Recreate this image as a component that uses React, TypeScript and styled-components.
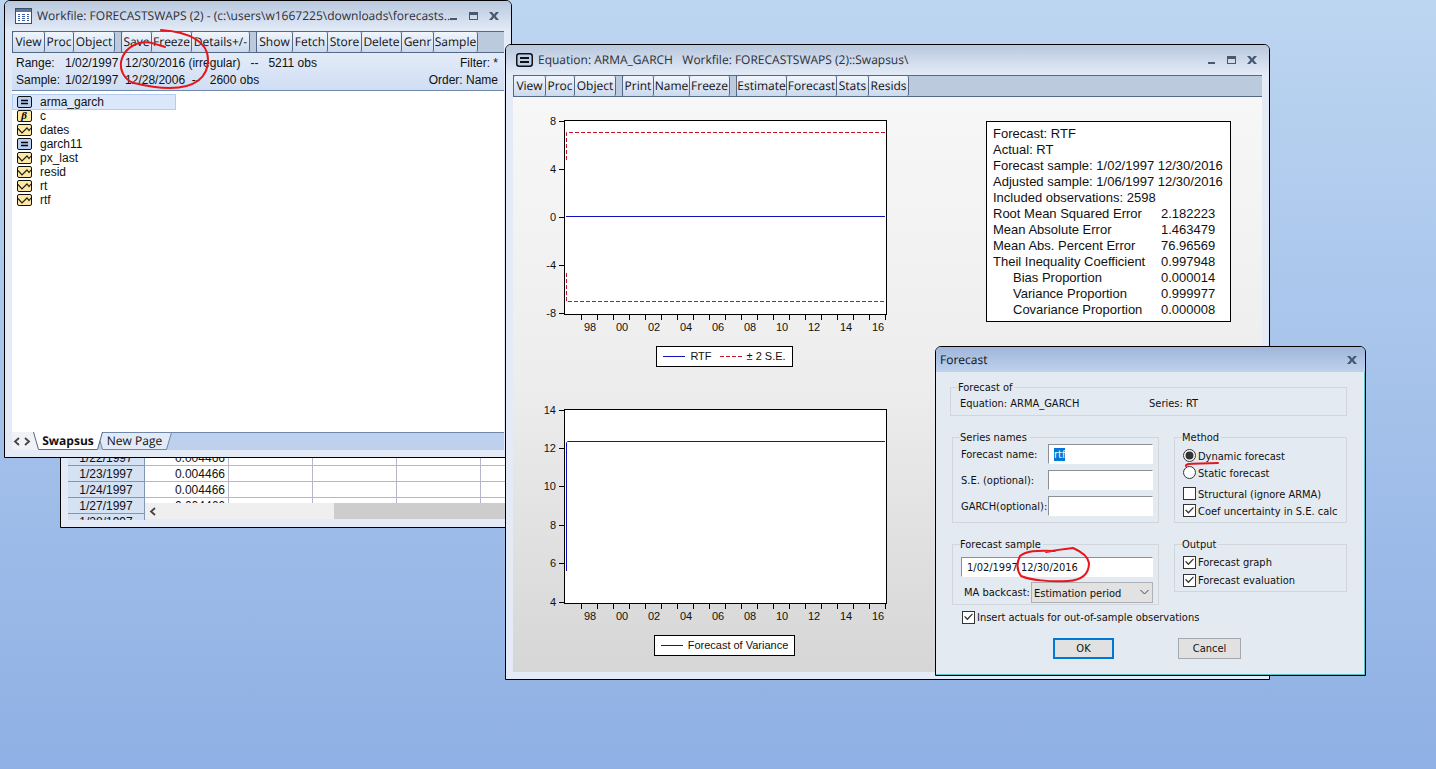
import React, { useEffect, useRef } from "react";
import styled, { createGlobalStyle, css } from "styled-components";

const uiFont = '"Open Sans", "Noto Sans", sans-serif';
const arial = '"Liberation Sans", Arial, sans-serif';
const dialogFont = '"DejaVu Sans Condensed", "DejaVu Sans", sans-serif';

const GlobalStyle = createGlobalStyle`
  * { box-sizing: border-box; }
  body { margin: 0; font-family: ${arial}; color: #111; }
  button, input, select { font: inherit; color: inherit; margin: 0; text-rendering: inherit; }
`;

const Desktop = styled.main`
  position: relative;
  min-height: 100vh;
  overflow: hidden;
  background: linear-gradient(#bcd5f1, #8fb0e4);
`;

/* ---------- window chrome ---------- */

const Frame = styled.section`
  position: absolute;
  display: flex;
  flex-direction: column;
  border: 1px solid #000;
  border-radius: 6px 6px 0 0;
  background: #e4ebf7;
  overflow: hidden;
`;

const DataWindow = styled(Frame)`
  left: 60px;
  top: 434px;
  width: 470px;
  height: 94px;
  padding: 15px 7px 7px;
`;

const WorkfileWindow = styled(Frame)`
  left: 4px;
  top: 0;
  width: 508px;
  height: 458px;
`;

const EquationWindow = styled(Frame)`
  left: 505px;
  top: 44px;
  width: 765px;
  height: 636px;
`;

const TitleBar = styled.header`
  display: flex;
  flex: none;
  align-items: center;
  height: 30px;
  padding: 0 7px 0 10px;
  background: linear-gradient(#b9c8de, #e3ebf7);
  font-family: ${uiFont};
  text-rendering: geometricPrecision;
  svg { flex: none; }
`;

const TitleText = styled.h1`
  flex: 1;
  min-width: 0;
  margin: 0 0 0 5px;
  font-size: 12px;
  line-height: 18px;
  font-weight: 400;
  color: #2b2f38;
  white-space: pre;
`;

const CaptionButton = styled.button`
  display: flex;
  flex: none;
  width: 20px;
  height: 20px;
  padding: 4px;
  border: 0;
  background: none;
  color: #465872;
`;

const Body = styled.div`
  display: flex;
  flex: 1;
  flex-direction: column;
  min-height: 0;
  margin: 0 7px 7px;
`;

const Toolbar = styled.nav`
  display: flex;
  flex: none;
  gap: 6px;
  height: 22px;
  border-top: 1px solid #536985;
  border-bottom: 1px solid #536985;
  background: #bccadd;
  font-family: ${uiFont};
  text-rendering: geometricPrecision;
`;

const ToolGroup = styled.div`
  display: flex;
  border-left: 1px solid #536985;
`;

const ToolButton = styled.button<{ $w: number }>`
  width: ${(p) => p.$w}px;
  padding: 0;
  border: 0;
  border-right: 1px solid #536985;
  border-radius: 2px;
  background: linear-gradient(#f1f6fd, #cbd9ed);
  font-size: 12px;
  line-height: 18px;
  text-align: center;
  white-space: nowrap;
`;

/* ---------- workfile ---------- */

const Info = styled.div`
  display: grid;
  grid-template-columns: 49px 1fr auto;
  flex: none;
  padding: 2px 6px 1px 4px;
  border-bottom: 1px solid #6f87a8;
  background: linear-gradient(#e3ebf8, #cfdef4);
  font-size: 12px;
  line-height: 17px;
  white-space: pre;
`;

const InfoEnd = styled.span`
  text-align: right;
`;

const ObjectList = styled.ul`
  flex: 1;
  margin: 0;
  padding: 4px 0 0;
  list-style: none;
  background: #fff;
  font-size: 12px;
`;

const ObjectItem = styled.li<{ $selected?: boolean }>`
  display: flex;
  align-items: center;
  gap: 8px;
  width: 164px;
  height: 14px;
  padding-left: 5px;
  ${(p) =>
    p.$selected &&
    css`
      background: #dbe8fb;
      box-shadow: 0 -1px #b3cdf2, 0 1px #b3cdf2, inset 1px 0 #b3cdf2, inset -1px 0 #b3cdf2;
    `}
`;

const TabBar = styled.div`
  display: flex;
  flex: none;
  height: 18px;
  background: #f0f2f6;
  font-family: ${uiFont};
  text-rendering: geometricPrecision;
`;

const TabArrow = styled.button`
  display: flex;
  align-items: center;
  width: 10px;
  padding: 0 1px;
  border: 0;
  background: none;
  color: #444;
`;

const Tab = styled.button<{ $active?: boolean }>`
  position: relative;
  z-index: ${(p) => (p.$active ? 2 : 1)};
  width: ${(p) => (p.$active ? 70 : 75)}px;
  margin-left: ${(p) => (p.$active ? 1 : -6)}px;
  padding: 0;
  border: 0;
  background: none;
  font-size: 12px;
  line-height: 18px;
  font-weight: ${(p) => (p.$active ? 700 : 400)};
  svg { position: absolute; inset: 0; z-index: -1; }
`;

const TabFill = styled.div`
  flex: 1;
  margin-left: -74px;
  border-top: 1px solid #6f87a8;
  background: #bdd0ed;
`;

/* ---------- data sheet ---------- */

const SheetArea = styled.div`
  position: relative;
  flex: 1;
  min-height: 0;
  overflow: hidden;
  background: #fff;
`;

const Sheet = styled.table`
  width: 497px;
  table-layout: fixed;
  border-spacing: 0;
  font-size: 12px;
  line-height: 14px;
  th, td {
    height: 16px;
    padding: 1px 3px 0;
    border-right: 1px solid #b4b8ca;
    border-bottom: 1px solid #b4b8ca;
    text-align: right;
    font-weight: 400;
  }
  th {
    border-color: #8296b5;
    background: #d5e2f4;
    text-align: center;
  }
`;

const ScrollBar = styled.div`
  position: absolute;
  left: 77px;
  right: 0;
  bottom: 0;
  display: flex;
  height: 17px;
  border-bottom: 1px solid #e4ebf7;
  background: #efefef;
`;

const ScrollButton = styled.button`
  display: flex;
  align-items: center;
  width: 17px;
  padding: 0 4px;
  border: 0;
  background: none;
  color: #444;
`;

const ScrollThumb = styled.div`
  flex: 1;
  margin-left: 172px;
  background: #cdcdcd;
`;

/* ---------- equation output ---------- */

const Output = styled.div`
  display: flex;
  flex: 1;
  align-items: flex-start;
  justify-content: space-between;
  padding: 18px 31px 0 27px;
  background: linear-gradient(#f7f7f7, #ededed 50%, #d6d6d6);
`;

const Charts = styled.div`
  display: flex;
  flex-direction: column;
  gap: 37px;
`;

const Figure = styled.figure`
  display: flex;
  flex-direction: column;
  align-items: center;
  gap: 9px;
  margin: 0;
  svg { display: block; }
  text { font-family: ${arial}; font-size: 11px; fill: #111; }
`;

const Legend = styled.figcaption`
  display: flex;
  align-items: center;
  gap: 8px;
  height: 21px;
  margin-left: 19px;
  padding: 0 6px;
  border: 1px solid #000;
  background: #fff;
  font-size: 11px;
  line-height: 19px;
`;

const LegendKey = styled.span`
  display: flex;
  align-items: center;
  gap: 5px;
`;

const StatsBox = styled.div`
  width: 245px;
  margin-top: 6px;
  padding: 4px 6px 3px;
  border: 1px solid #000;
  background: #fff;
  font-size: 13px;
  line-height: 16px;
  white-space: nowrap;
  p { margin: 0; }
`;

const StatsTable = styled.table`
  border-spacing: 0;
  th, td { padding: 0; text-align: left; font-weight: 400; }
  th { width: 168px; }
`;

const StatName = styled.th<{ $indent?: boolean }>`
  && { padding-left: ${(p) => (p.$indent ? 20 : 0)}px; }
`;

/* ---------- forecast dialog ---------- */

const Dialog = styled(Frame)`
  left: 935px;
  top: 346px;
  width: 431px;
  height: 330px;
  background: #e4eaf2;
  box-shadow: inset -1px -1px #58c3c6;
  font-family: ${dialogFont};
  font-size: 11px;
  line-height: 14px;
`;

const DialogTitle = styled.header`
  display: flex;
  align-items: center;
  justify-content: space-between;
  height: 25px;
  padding: 0 3px 0 4px;
  background: linear-gradient(#9fb6da, #bfd2ec);
  font-family: ${uiFont};
  text-rendering: geometricPrecision;
  h2 { margin: 0; font-size: 12px; font-weight: 400; }
`;

const Form = styled.form`
  display: flex;
  flex-direction: column;
  gap: 14px;
  padding: 8px 18px 0 14px;
`;

const Group = styled.fieldset`
  min-width: 0;
  margin: 0;
  padding: 0 5px 6px 8px;
  border: 1px solid #d1d6dd;
  legend {
    height: 14px;
    margin-left: -1px;
    padding: 0 2px 0 0;
    line-height: 16px;
  }
`;

const SummaryRow = styled.div`
  display: grid;
  grid-template-columns: 189px 1fr;
  padding-left: 1px;
  line-height: 20px;
`;

const EquationGroup = styled(Group)`
  height: 36px;
`;

const Columns = styled.div`
  display: grid;
  grid-template-columns: 207fr 173fr;
  align-items: start;
  gap: 14px 15px;
  margin-left: 2px;
`;

const FieldRow = styled.div`
  display: grid;
  grid-template-columns: 87px 1fr;
  align-items: center;
  & + & { margin-top: 6px; }
  label { padding-top: 2px; white-space: nowrap; }
`;

const SeriesGroup = styled(Group)`
  height: 93px;
`;

const MethodGroup = styled(Group)`
  height: 93px;
  padding-top: 3px;
`;

const SampleGroup = styled(Group)`
  height: 68px;
  padding-top: 6px;
`;

const OutputGroup = styled(Group)`
  height: 55px;
  padding-top: 2px;
`;

const TextInput = styled.input`
  width: 100%;
  height: 20px;
  padding: 0 5px;
  border: 1px solid;
  border-color: #8b8f96 #fff #fff #8b8f96;
  border-radius: 0;
  background: #fff;
  outline: 0;
  &::selection { background: #0078d7; color: #fff; }
`;

const BackcastRow = styled.div`
  display: flex;
  align-items: center;
  justify-content: space-between;
  margin-top: 5px;
  padding-left: 3px;
`;

const SelectBox = styled.div`
  position: relative;
  width: 122px;
  svg { position: absolute; right: 4px; top: 7px; pointer-events: none; }
`;

const Select = styled.select`
  width: 100%;
  height: 21px;
  padding: 2px 2px 0;
  border: 1px solid #adb1b6;
  border-radius: 0;
  background: #e2e2e2;
  appearance: none;
`;

const Option = styled.label<{ $h: number; $gap?: boolean }>`
  display: flex;
  align-items: center;
  gap: 2px;
  height: ${(p) => p.$h}px;
  margin-top: ${(p) => (p.$gap ? 4 : 0)}px;
  white-space: nowrap;
  span { padding-top: 2px; }
`;

const CheckInput = styled.input`
  flex: none;
  width: 13px;
  height: 13px;
  border: 1px solid #333;
  background: #fff;
  appearance: none;
  &[type="radio"] { border-radius: 50%; }
  &:checked::after {
    content: "";
    display: block;
    width: 11px;
    height: 11px;
    background: #333;
    clip-path: polygon(10% 48%, 19% 40%, 40% 62%, 82% 18%, 90% 26%, 40% 80%);
  }
  &[type="radio"]:checked::after { clip-path: circle(4px); }
`;

const InsertRow = styled.div`
  margin: -9px 0 0 12px;
`;

const Actions = styled.div`
  display: flex;
  gap: 64px;
  margin-left: 103px;
`;

const PushButton = styled.button<{ $primary?: boolean }>`
  width: ${(p) => (p.$primary ? 61 : 63)}px;
  height: 21px;
  padding: 1px 0 0;
  border: ${(p) => (p.$primary ? "2px solid #0078d7" : "1px solid #a5a9ae")};
  background: #e1e1e1;
`;

const Ink = styled.svg`
  position: absolute;
  left: 0;
  top: 0;
  pointer-events: none;
`;

/* ---------- drawings ---------- */

const CloseIcon = () => (
  <svg width="12" height="12" viewBox="0 0 12 12">
    <path d="M1 2h3l2 2.500L8 2h3L7.600 6l3.400 4H8L6 7.500 4 10H1l3.400-4z" fill="currentColor" />
  </svg>
);

const CaptionButtons = () => (
  <>
    <CaptionButton type="button" aria-label="Minimize">
      <svg width="12" height="12" viewBox="0 0 12 12"><path d="M2 8h7v2H2z" fill="currentColor" /></svg>
    </CaptionButton>
    <CaptionButton type="button" aria-label="Maximize">
      <svg width="12" height="12" viewBox="0 0 12 12"><path d="M1 2h9v8H1zM2 5v4h7V5z" fillRule="evenodd" fill="currentColor" /></svg>
    </CaptionButton>
    <CaptionButton type="button" aria-label="Close"><CloseIcon /></CaptionButton>
  </>
);

const WorkfileIcon = () => (
  <svg width="17" height="16" viewBox="0 0 17 16">
    <rect x="0.500" y="0.500" width="16" height="15" fill="#fff" stroke="#3c4e69" />
    <path d="M1 1h15v3H1z" fill="#5e7798" />
    <path d="M3 6.500h2M7 6.500h3M12 6.500h2M3 8.500h2M7 8.500h3M12 8.500h2M3 10.500h2M7 10.500h3M12 10.500h2M3 12.500h2M7 12.500h3M12 12.500h2" stroke="#3d62a8" />
  </svg>
);

const EquationTitleIcon = () => (
  <svg width="17" height="14" viewBox="0 0 17 14">
    <rect x="0.750" y="0.750" width="15.500" height="12.500" rx="2.500" fill="#bcd0ee" stroke="#111" strokeWidth="1.500" />
    <path d="M4 5h9M4 9h9" stroke="#111" strokeWidth="2" />
  </svg>
);

type Kind = "equation" | "coef" | "series";

const ObjectIcon = ({ kind }: { kind: Kind }) => (
  <svg width="15" height="12" viewBox="0 0 15 12">
    <rect x="0.500" y="0.500" width="14" height="11" rx="1.500" fill={kind === "equation" ? "#b9cef0" : "#ffe8a0"} stroke="#111" />
    {kind === "equation" && <path d="M4 4.500h7M4 7.500h7" stroke="#000" strokeWidth="1.500" />}
    {kind === "coef" && (
      <text x="7" y="9" textAnchor="middle" fontFamily="Liberation Serif, serif" fontSize="11" fontStyle="italic" fontWeight="700">β</text>
    )}
    {kind === "series" && <path d="M1 4.500l4 4.500L10 4l2 2.500 2-2.500" fill="none" stroke="#222" strokeWidth="1.200" />}
  </svg>
);

const Chevron = ({ dir }: { dir: "left" | "right" }) => (
  <svg width="8" height="9" viewBox="0 0 8 9">
    <path d={dir === "left" ? "M6 1L2 4.500 6 8" : "M2 1l4 3.500L2 8"} fill="none" stroke="currentColor" strokeWidth="1.800" />
  </svg>
);

interface ChartProps {
  label: string;
  ticks: { y: number; text: string }[];
  children: React.ReactNode;
}

const years = ["98", "00", "02", "04", "06", "08", "10", "12", "14", "16"];

const Chart = ({ label, ticks, children }: ChartProps) => (
  <svg width="350" height="222" viewBox="0 0 350 222" role="img" aria-label={label}>
    <rect x="24.500" y="5.500" width="322" height="194" fill="#fff" stroke="#000" />
    {ticks.map((t) => (
      <g key={t.text}>
        <path d={`M19 ${t.y + 0.5}h5`} stroke="#000" />
        <text x="16" y={t.y + 4} textAnchor="end">{t.text}</text>
      </g>
    ))}
    {Array.from({ length: 20 }, (_, i) => (
      <path key={i} d={`M${41.5 + i * 16} 200v5`} stroke="#000" />
    ))}
    {years.map((y, i) => (
      <text key={y} x={50 + i * 32} y="216" textAnchor="middle">{y}</text>
    ))}
    {children}
  </svg>
);

const Line = ({ dashed }: { dashed?: boolean }) => (
  <svg width="22" height="3" viewBox="0 0 22 3">
    <path d="M0 1.500h22" stroke={dashed ? "#c4142c" : "#1010c0"} strokeDasharray={dashed ? "4 2" : undefined} />
  </svg>
);

/* ---------- data ---------- */

const workfileTools: [string, number][][] = [
  [["View", 32], ["Proc", 29], ["Object", 41]],
  [["Save", 30], ["Freeze", 40], ["Details+/-", 58]],
  [["Show", 36], ["Fetch", 35], ["Store", 34], ["Delete", 40], ["Genr", 32], ["Sample", 44]],
];

const equationTools: [string, number][][] = [
  [["View", 32], ["Proc", 29], ["Object", 41]],
  [["Print", 31], ["Name", 36], ["Freeze", 40]],
  [["Estimate", 50], ["Forecast", 50], ["Stats", 32], ["Resids", 40]],
];

const objects: { name: string; kind: Kind }[] = [
  { name: "arma_garch", kind: "equation" },
  { name: "c", kind: "coef" },
  { name: "dates", kind: "series" },
  { name: "garch11", kind: "equation" },
  { name: "px_last", kind: "series" },
  { name: "resid", kind: "series" },
  { name: "rt", kind: "series" },
  { name: "rtf", kind: "series" },
];

const stats: [string, string, boolean][] = [
  ["Root Mean Squared Error", "2.182223", false],
  ["Mean Absolute Error", "1.463479", false],
  ["Mean Abs. Percent Error", "76.96569", false],
  ["Theil Inequality Coefficient", "0.997948", false],
  ["Bias Proportion", "0.000014", true],
  ["Variance Proportion", "0.999977", true],
  ["Covariance Proportion", "0.000008", true],
];

const sheetDates = ["1/22/1997", "1/23/1997", "1/24/1997", "1/27/1997", "1/28/1997"];

const Tools = ({ groups }: { groups: [string, number][][] }) => (
  <Toolbar>
    {groups.map((g) => (
      <ToolGroup key={g[0][0]}>
        {g.map(([name, w]) => (
          <ToolButton key={name} type="button" $w={w}>{name}</ToolButton>
        ))}
      </ToolGroup>
    ))}
  </Toolbar>
);

const ForecastDialog = () => {
  const nameRef = useRef<HTMLInputElement>(null);
  useEffect(() => {
    nameRef.current?.focus();
    nameRef.current?.select();
  }, []);

  return (
    <Dialog role="dialog" aria-label="Forecast">
      <DialogTitle>
        <h2>Forecast</h2>
        <CaptionButton type="button" aria-label="Close"><CloseIcon /></CaptionButton>
      </DialogTitle>
      <Form>
        <EquationGroup>
          <legend>Forecast of</legend>
          <SummaryRow>
            <span>Equation: ARMA_GARCH</span>
            <span>Series: RT</span>
          </SummaryRow>
        </EquationGroup>
        <Columns>
          <SeriesGroup>
            <legend>Series names</legend>
            <FieldRow>
              <label htmlFor="fname">Forecast name:</label>
              <TextInput id="fname" ref={nameRef} defaultValue="rtf" />
            </FieldRow>
            <FieldRow>
              <label htmlFor="se">S.E. (optional):</label>
              <TextInput id="se" />
            </FieldRow>
            <FieldRow>
              <label htmlFor="garch">GARCH(optional):</label>
              <TextInput id="garch" />
            </FieldRow>
          </SeriesGroup>
          <MethodGroup>
            <legend>Method</legend>
            <Option $h={17}><CheckInput type="radio" name="method" defaultChecked /><span>Dynamic forecast</span></Option>
            <Option $h={17}><CheckInput type="radio" name="method" /><span>Static forecast</span></Option>
            <Option $h={17} $gap><CheckInput type="checkbox" /><span>Structural (ignore ARMA)</span></Option>
            <Option $h={17}><CheckInput type="checkbox" defaultChecked /><span>Coef uncertainty in S.E. calc</span></Option>
          </MethodGroup>
          <SampleGroup>
            <legend>Forecast sample</legend>
            <TextInput aria-label="Forecast sample" defaultValue="1/02/1997 12/30/2016" />
            <BackcastRow>
              <label htmlFor="backcast">MA backcast:</label>
              <SelectBox>
                <Select id="backcast"><option>Estimation period</option></Select>
                <svg width="9" height="7" viewBox="0 0 9 7"><path d="M0.500 1l4 4 4-4" fill="none" stroke="#444" /></svg>
              </SelectBox>
            </BackcastRow>
          </SampleGroup>
          <OutputGroup>
            <legend>Output</legend>
            <Option $h={18}><CheckInput type="checkbox" defaultChecked /><span>Forecast graph</span></Option>
            <Option $h={18}><CheckInput type="checkbox" defaultChecked /><span>Forecast evaluation</span></Option>
          </OutputGroup>
        </Columns>
        <InsertRow>
          <Option $h={14}>
            <CheckInput type="checkbox" defaultChecked />
            <span>Insert actuals for out-of-sample observations</span>
          </Option>
        </InsertRow>
        <Actions>
          <PushButton type="button" $primary>OK</PushButton>
          <PushButton type="button">Cancel</PushButton>
        </Actions>
      </Form>
    </Dialog>
  );
};

export default function App() {
  return (
    <Desktop>
      <GlobalStyle />

      <DataWindow>
        <SheetArea>
          <Sheet>
            <colgroup>
              <col width="77" />
              <col width="84" /><col width="84" /><col width="84" /><col width="84" /><col width="84" />
            </colgroup>
            <tbody>
              {sheetDates.map((d) => (
                <tr key={d}><th scope="row">{d}</th><td>0.004466</td><td /><td /><td /><td /></tr>
              ))}
            </tbody>
          </Sheet>
          <ScrollBar>
            <ScrollButton type="button" aria-label="Scroll left"><Chevron dir="left" /></ScrollButton>
            <ScrollThumb />
          </ScrollBar>
        </SheetArea>
      </DataWindow>

      <WorkfileWindow>
        <TitleBar>
          <WorkfileIcon />
          <TitleText>{"Workfile: FORECASTSWAPS (2) - (c:\\users\\w1667225\\downloads\\forecasts..."}</TitleText>
          <CaptionButtons />
        </TitleBar>
        <Body>
          <Tools groups={workfileTools} />
          <Info>
            <span>Range:</span>
            <span>{"1/02/1997  12/30/2016 (irregular)   --   5211 obs"}</span>
            <InfoEnd>Filter: *</InfoEnd>
            <span>Sample:</span>
            <span>{"1/02/1997  12/28/2006  --   2600 obs"}</span>
            <InfoEnd>Order: Name</InfoEnd>
          </Info>
          <ObjectList>
            {objects.map((o, i) => (
              <ObjectItem key={o.name} $selected={i === 0}>
                <ObjectIcon kind={o.kind} />
                {o.name}
              </ObjectItem>
            ))}
          </ObjectList>
          <TabBar>
            <TabArrow type="button" aria-label="Previous page"><Chevron dir="left" /></TabArrow>
            <TabArrow type="button" aria-label="Next page"><Chevron dir="right" /></TabArrow>
            <Tab type="button" $active>
              <svg width="70" height="18" viewBox="0 0 70 18">
                <path d="M0.500 0l5 17.500h59L69.500 0" fill="#fff" stroke="#536985" />
              </svg>
              Swapsus
            </Tab>
            <Tab type="button">
              <svg width="75" height="18" viewBox="0 0 75 18">
                <path d="M0.500 0.500l5 17h64l5-17z" fill="#e2eaf7" stroke="#6f87a8" />
              </svg>
              New Page
            </Tab>
            <TabFill />
          </TabBar>
        </Body>
      </WorkfileWindow>

      <EquationWindow>
        <TitleBar>
          <EquationTitleIcon />
          <TitleText>{"Equation: ARMA_GARCH   Workfile: FORECASTSWAPS (2)::Swapsus\\"}</TitleText>
          <CaptionButtons />
        </TitleBar>
        <Body>
          <Tools groups={equationTools} />
          <Output>
            <Charts>
              <Figure>
                <Chart
                  label="Forecast with standard error bands"
                  ticks={[
                    { y: 6, text: "8" }, { y: 54, text: "4" }, { y: 102, text: "0" },
                    { y: 150, text: "-4" }, { y: 198, text: "-8" },
                  ]}
                >
                  <path d="M26.500 45V17.500H346M26.500 158v28.500H346" fill="none" stroke="#c4142c" strokeDasharray="4 2" />
                  <path d="M26 101.500h319" stroke="#1010c0" />
                </Chart>
                <Legend>
                  <LegendKey><Line />RTF</LegendKey>
                  <LegendKey><Line dashed />± 2 S.E.</LegendKey>
                </Legend>
              </Figure>
              <Figure>
                <Chart
                  label="Forecast of variance"
                  ticks={[
                    { y: 6, text: "14" }, { y: 44, text: "12" }, { y: 82, text: "10" },
                    { y: 121, text: "8" }, { y: 159, text: "6" }, { y: 198, text: "4" },
                  ]}
                >
                  <path d="M26.500 167V38.500l1-1H345" fill="none" stroke="#1010c0" />
                </Chart>
                <Legend>
                  <LegendKey><Line />Forecast of Variance</LegendKey>
                </Legend>
              </Figure>
            </Charts>
            <StatsBox>
              <p>Forecast: RTF</p>
              <p>Actual: RT</p>
              <p>Forecast sample: 1/02/1997 12/30/2016</p>
              <p>Adjusted sample: 1/06/1997 12/30/2016</p>
              <p>Included observations: 2598</p>
              <StatsTable>
                <tbody>
                  {stats.map(([name, value, indent]) => (
                    <tr key={name}><StatName scope="row" $indent={indent}>{name}</StatName><td>{value}</td></tr>
                  ))}
                </tbody>
              </StatsTable>
            </StatsBox>
          </Output>
        </Body>
      </EquationWindow>

      <ForecastDialog />

      <Ink width="100%" height="100%" fill="none" stroke="#e6161c" strokeWidth="2" strokeLinecap="round" aria-hidden="true">
        <path d="M161 30C190 32 208 42 208 60C208 78 194 88 170 88C158 88 146 86 134 83C124 80 120 70 121 62C123 52 130 46 139 43C148 41 152 43 165 47" />
        <path d="M1046 552C1056 550 1064 549 1073 548C1080 551 1088 556 1089 563C1089 573 1083 580 1068 581C1050 582 1030 580 1021 576C1016 569 1017 562 1020 556C1026 551 1036 550 1055 551" />
        <path d="M1186 466C1186 463 1190 464 1218 463" />
      </Ink>
    </Desktop>
  );
}
